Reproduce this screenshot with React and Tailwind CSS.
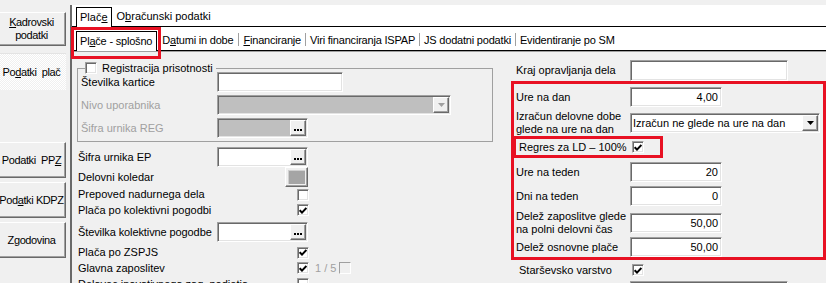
const sunken =
  "border border-t-[#a0a0a0] border-l-[#a0a0a0] border-r-white border-b-white shadow-[inset_1px_1px_0_#696969,inset_-1px_-1px_0_#e3e3e3]";
const raised =
  "border border-t-white border-l-white border-r-[#696969] border-b-[#696969] shadow-[inset_-1px_-1px_0_#a0a0a0]";

function Check({ checked, disabled }) {
  return (
    <span
      className={`w-[12px] h-[12px] shrink-0 flex items-center justify-center ${
        disabled
          ? "border border-t-[#a0a0a0] border-l-[#a0a0a0] border-r-white border-b-white bg-[#f0f0f0]"
          : `${sunken} bg-white`
      }`}
    >
      {checked && (
        <svg width="8" height="7" viewBox="0 0 8 7">
          <path d="M0.7 3.2 L3 5.6 L7.4 1" fill="none" stroke="#000" strokeWidth="2" />
        </svg>
      )}
    </span>
  );
}

function Dots() {
  return (
    <span className={`w-[16px] h-full shrink-0 bg-[#f0f0f0] ${raised} flex items-end justify-center gap-[1px] pb-[4px]`}>
      <i className="w-[2px] h-[2px] bg-black" />
      <i className="w-[2px] h-[2px] bg-black" />
      <i className="w-[2px] h-[2px] bg-black" />
    </span>
  );
}

function Field({ className, value, disabled, dots }) {
  return (
    <div className={`${className} h-[20px] shrink-0 flex p-px ${sunken} ${disabled ? "bg-[#bfbfbf]" : "bg-white"}`}>
      <span className="flex-1 text-right pr-[2px] leading-[16px]">{value}</span>
      {dots && <Dots />}
    </div>
  );
}

function Combo({ className, text, disabled }) {
  return (
    <div className={`${className} h-[20px] shrink-0 flex p-px ${sunken} ${disabled ? "bg-[#bfbfbf]" : "bg-white"}`}>
      <span className="flex-1 pl-[1px] leading-[16px] whitespace-nowrap overflow-hidden">{text}</span>
      <span className={`w-[16px] h-full shrink-0 bg-[#f0f0f0] ${raised} flex items-center justify-center`}>
        <svg width="7" height="4" viewBox="0 0 7 4">
          <path d="M0 0h7L3.5 4z" fill={disabled ? "#a0a0a0" : "#000"} />
        </svg>
      </span>
    </div>
  );
}

function SideButton({ className, children, active }) {
  return (
    <div
      className={`w-[69px] -ml-[3px] shrink-0 flex items-center justify-center text-center leading-[13px] whitespace-pre tracking-[-0.4px] ${
        active
          ? "bg-[conic-gradient(#ffffff_25%,#f0f0f0_0_50%,#ffffff_0_75%,#f0f0f0_0)] bg-[length:2px_2px] border-t border-[#e3e3e3]"
          : `bg-[#f0f0f0] ${raised}`
      } ${className}`}
    >
      {children}
    </div>
  );
}

const U = ({ children }) => <span className="underline underline-offset-1">{children}</span>;

function Sep() {
  return <span className="w-px h-[13px] bg-[#a0a0a0] self-center mt-[2px]" />;
}

export default function App() {
  return (
    <div className="relative w-[826px] h-[283px] overflow-hidden bg-[#f0f0f0] flex items-start font-['Liberation_Sans',Arial,sans-serif] text-[11px] leading-[13px] text-black">
      {/* left buttons */}
      <aside className="w-[70px] shrink-0 flex flex-col">
        <SideButton className="mt-[12px] h-[34px]">
          <span>
            <U>K</U>adrovski
            <br />
            podatki
          </span>
        </SideButton>
        <SideButton className="mt-[7px] h-[37px]" active>
          <span>
            Po<U>d</U>atki{"  "}plač
          </span>
        </SideButton>
        <SideButton className="mt-[52px] h-[36px]">
          <span>
            Podatki{"  "}PP<U>Z</U>
          </span>
        </SideButton>
        <SideButton className="mt-[4px] h-[36px]">
          <span>
            Pod<U>a</U>tki KDPZ
          </span>
        </SideButton>
        <SideButton className="mt-[4px] h-[36px]">Zgodovina</SideButton>
      </aside>

      {/* main tab control */}
      <main className="flex-1 min-w-0 mt-[5px] flex flex-col border-l-2 border-[#696969]">
        <div className="h-[22px] bg-white border-b border-black flex items-end pl-[4px]">
          <div className="h-[20px] -mb-px bg-white border border-b-0 border-black px-[3px] flex items-center">
            <span>
              Plač<U>e</U>
            </span>
          </div>
          <div className="h-[20px] flex items-center px-[5px]">
            <span>
              O<U>b</U>računski podatki
            </span>
          </div>
        </div>
        <div className="h-[24px] bg-white border-b border-black flex items-end pl-[4px] whitespace-nowrap tracking-[-0.2px]">
          <div className="h-[20px] -mb-px bg-white border border-b-0 border-black pl-[3px] pr-[4px] flex items-center">
            <span>
              Pl<U>a</U>če - splošno
            </span>
          </div>
          <div className="h-[20px] flex items-center px-[5px]">
            <span>
              D<U>a</U>tumi in dobe
            </span>
          </div>
          <Sep />
          <div className="h-[20px] flex items-center px-[4px]">
            <span>
              <U>F</U>inanciranje
            </span>
          </div>
          <Sep />
          <div className="h-[20px] flex items-center px-[4px]">Viri financiranja ISPAP</div>
          <Sep />
          <div className="h-[20px] flex items-center px-[4px]">JS dodatni podatki</div>
          <Sep />
          <div className="h-[20px] flex items-center px-[4px]">Evidentiranje po SM</div>
        </div>
        <div className="h-px bg-[#a0a0a0]" />

        <div className="flex">
          {/* left form column */}
          <div className="w-[439px] shrink-0 pl-[5px] flex flex-col">
            <fieldset className="w-[416px] mt-[10px] border border-[#a0a0a0] pl-[3px] pb-[3px] flex flex-col">
              <legend className="ml-[4px] pr-[3px] h-[12px] flex items-center gap-[5px]">
                <Check />
                <span>Registracija prisotnosti</span>
              </legend>
              <div className="flex items-center h-[20px] -mt-[2px]">
                <span className="w-[136px]">Številka kartice</span>
                <Field className="w-[126px]" />
              </div>
              <div className="flex items-center h-[20px] mt-[3px] text-[#a0a0a0]">
                <span className="w-[136px]">Nivo uporabnika</span>
                <Combo className="w-[234px]" disabled />
              </div>
              <div className="flex items-center h-[20px] mt-[3px] text-[#a0a0a0]">
                <span className="w-[136px]">Šifra urnika REG</span>
                <Field className="w-[91px]" disabled dots />
              </div>
            </fieldset>

            <div className="pl-[1px] flex flex-col whitespace-nowrap">
              <div className="flex items-center h-[20px] mt-[5px]">
                <span className="w-[139px]">Šifra urnika EP</span>
                <Field className="w-[91px]" dots />
              </div>
              <div className="flex items-center h-[20px]">
                <span className="w-[207px]">Delovni koledar</span>
                <span className={`w-[23px] h-[20px] ${raised} p-[2px] bg-[#f0f0f0]`}>
                  <span className="block w-full h-full bg-[#a5a5a5] border-t border-l border-[#d0d0d0]" />
                </span>
              </div>
              <div className="flex items-center h-[15px]">
                <span className="w-[219px]">Prepoved nadurnega dela</span>
                <Check />
              </div>
              <div className="flex items-center h-[16px]">
                <span className="w-[219px]">Plača po kolektivni pogodbi</span>
                <Check checked />
              </div>
              <div className="flex items-center h-[20px] mt-[4px]">
                <span className="w-[139px] tracking-[-0.1px]">Številka kolektivne pogodbe</span>
                <Field className="w-[91px]" dots />
              </div>
              <div className="flex items-center h-[15px] mt-[3px]">
                <span className="w-[219px]">Plača po ZSPJS</span>
                <Check checked />
              </div>
              <div className="flex items-center h-[16px]">
                <span className="w-[219px]">Glavna zaposlitev</span>
                <Check checked />
                <span className="ml-[6px] mr-[3px] text-[#a0a0a0]">1 / 5</span>
                <Check disabled />
              </div>
              <div className="flex items-center h-[16px]">
                <span className="w-[219px]">Delavec inovativnega zag. podjetja</span>
                <Check />
              </div>
            </div>
          </div>

          {/* right form column */}
          <div className="w-[315px] shrink-0 flex flex-col whitespace-nowrap">
            <div className="flex items-center h-[21px] mt-[8px] pl-[5px]">
              <span className="w-[114px]">Kraj opravljanja dela</span>
              <Field className="w-[158px] h-[21px]" />
            </div>

            <div className="w-[315px] h-[179px] border-[3px] border-[#e81123] flex flex-col">
              <div className="flex items-center h-[20px] mt-[3px] pl-[2px]">
                <span className="w-[114px]">Ure na dan</span>
                <Field className="w-[92px]" value="4,00" />
              </div>
              <div className="flex items-center h-[26px] mt-[3px] pl-[2px]">
                <span className="w-[114px]">
                  Izračun delovne dobe
                  <br />
                  glede na ure na dan
                </span>
                <Combo className="w-[190px]" text="Izračun ne glede na ure na dan" />
              </div>
              <div className="-ml-px w-[150px] h-[22px] shrink-0 border-[3px] border-[#e81123] flex items-center pl-[3px]">
                <span className="w-[113px]">Regres za LD – 100%</span>
                <Check checked />
              </div>
              <div className="flex items-center h-[20px] mt-[4px] pl-[2px]">
                <span className="w-[114px]">Ure na teden</span>
                <Field className="w-[92px]" value="20" />
              </div>
              <div className="flex items-center h-[20px] mt-[4px] pl-[2px]">
                <span className="w-[114px]">Dni na teden</span>
                <Field className="w-[92px]" value="0" />
              </div>
              <div className="flex items-center h-[26px] mt-[4px] pl-[2px]">
                <span className="w-[114px]">
                  Delež zaposlitve glede
                  <br />
                  na polni delovni čas
                </span>
                <Field className="w-[92px]" value="50,00" />
              </div>
              <div className="flex items-center h-[20px] mt-px pl-[2px]">
                <span className="w-[114px]">Delež osnovne plače</span>
                <Field className="w-[92px]" value="50,00" />
              </div>
            </div>

            <div className="flex items-center h-[14px] mt-[3px] pl-[8px]">
              <span className="w-[113px]">Starševsko varstvo</span>
              <Check checked />
            </div>
            <Field className="w-[158px] mt-[4px] ml-[119px]" />
          </div>
        </div>
      </main>

      {/* annotation around the active sub tab */}
      <div className="absolute left-[71px] top-[27px] w-[90px] h-[32px] border-[3px] border-[#e81123]" />
    </div>
  );
}
